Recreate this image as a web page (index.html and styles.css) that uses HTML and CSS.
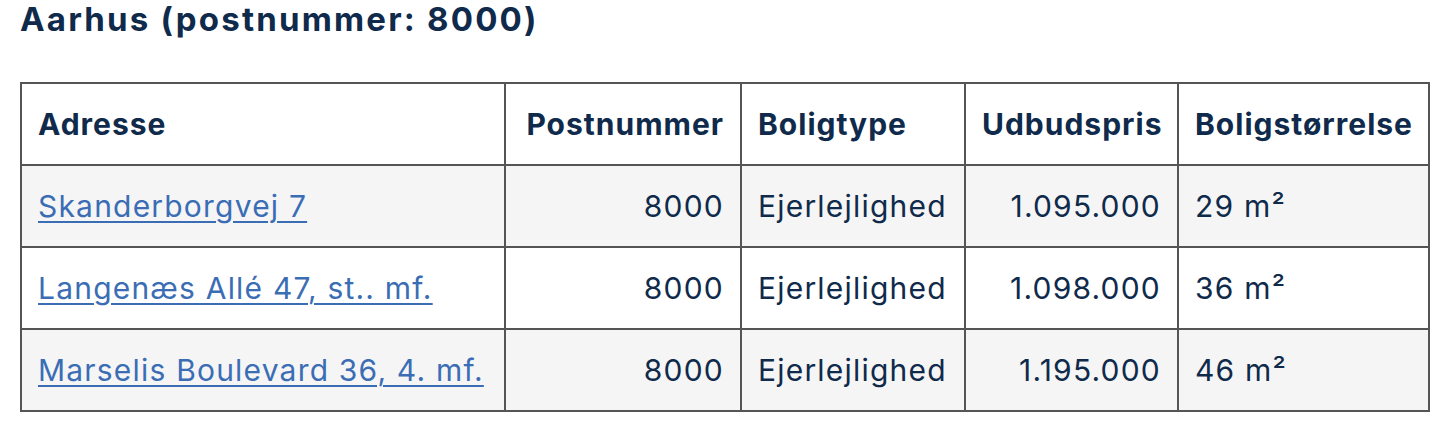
FILE: index.html
```html
<!DOCTYPE html>
<html lang="da">
<head>
<meta charset="utf-8">
<title>Aarhus (postnummer: 8000)</title>
<link rel="stylesheet" href="styles.css">
</head>
<body>
<main class="page">
  <h2 class="city-title">Aarhus (postnummer: 8000)</h2>
  <table class="listings">
    <colgroup>
      <col class="c-addr">
      <col class="c-zip">
      <col class="c-type">
      <col class="c-price">
      <col class="c-size">
    </colgroup>
    <thead>
      <tr>
        <th>Adresse</th>
        <th class="num">Postnummer</th>
        <th>Boligtype</th>
        <th class="num">Udbudspris</th>
        <th>Boligstørrelse</th>
      </tr>
    </thead>
    <tbody>
      <tr>
        <td><a href="#">Skanderborgvej 7</a></td>
        <td class="num">8000</td>
        <td>Ejerlejlighed</td>
        <td class="num">1.095.000</td>
        <td>29 m²</td>
      </tr>
      <tr>
        <td><a href="#">Langenæs Allé 47, st.. mf.</a></td>
        <td class="num">8000</td>
        <td>Ejerlejlighed</td>
        <td class="num">1.098.000</td>
        <td>36 m²</td>
      </tr>
      <tr>
        <td><a href="#">Marselis Boulevard 36, 4. mf.</a></td>
        <td class="num">8000</td>
        <td>Ejerlejlighed</td>
        <td class="num">1.195.000</td>
        <td>46 m²</td>
      </tr>
    </tbody>
  </table>
</main>
</body>
</html>
```
FILE: styles.css
```css
html, body {
  margin: 0;
  padding: 0;
  background: #ffffff;
}

.page {
  padding: 0 16px 0 20px;
  font-family: Inter, "Noto Sans", sans-serif;
  color: #0f2a4b;
}

.city-title {
  margin: 0;
  font-size: 33px;
  line-height: 38px;
  font-weight: 700;
  letter-spacing: 2.2px;
}

.listings {
  margin-top: 44px;
  width: 1410px;
  table-layout: fixed;
  border-collapse: collapse;
  border: 2px solid #555555;
  font-size: 30px;
  line-height: 36px;
  letter-spacing: 1.2px;
}

.c-addr { width: 484px; }
.c-zip { width: 236px; }
.c-type { width: 224px; }
.c-price { width: 213px; }
.c-size { width: 251px; }

.listings th,
.listings td {
  border: 2px solid #555555;
  padding: 22px 16px;
  text-align: left;
  vertical-align: middle;
  white-space: nowrap;
}

.listings th {
  font-weight: 700;
  letter-spacing: 1px;
}

.listings .num {
  text-align: right;
}

.listings tbody tr:nth-child(odd) {
  background: #f5f5f5;
}

.listings a {
  color: #3b6db5;
  text-decoration: underline;
  text-decoration-thickness: 2px;
  text-underline-offset: 4px;
}
```
